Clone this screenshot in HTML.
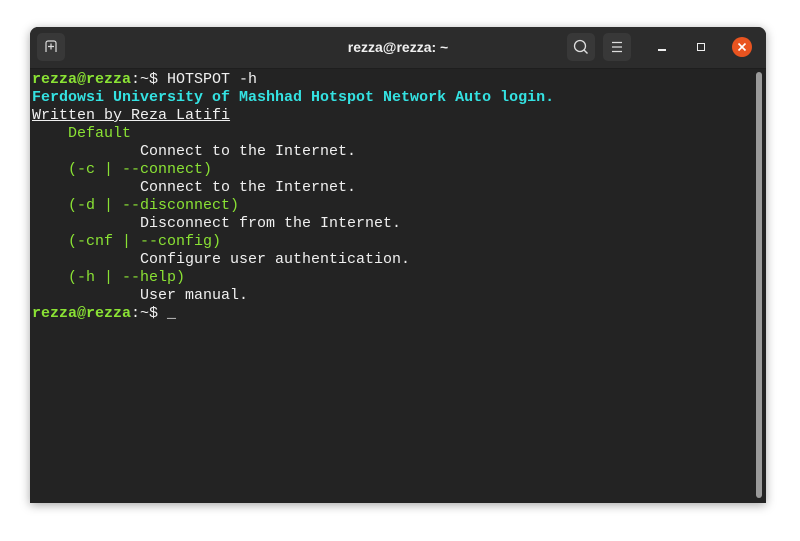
<!DOCTYPE html>
<html><head><style>
html,body{margin:0;padding:0;width:800px;height:541px;background:#fff;overflow:hidden}
.win{position:absolute;left:30px;top:27px;width:736px;height:476px;background:#232323;border-radius:8px 8px 0 0;box-shadow:0 2px 10px rgba(0,0,0,.35);overflow:hidden}
.hb{position:absolute;left:0;top:0;width:736px;height:41px;background:#2c2c2c;border-bottom:1px solid #1e1e1e}
.btn{position:absolute;top:6px;width:28px;height:28px;background:#383838;border-radius:5px}
.title{position:absolute;left:0;width:736px;top:12px;text-align:center;color:#f0f0f0;font:bold 14px "Liberation Sans",sans-serif}
.term{position:absolute;left:2px;top:44px;font:15px/18px "Liberation Mono",monospace;color:#f0f0f0;white-space:pre}
.g{color:#8ae234;font-weight:bold}.gl{color:#8ae234}.c{color:#34e2e2;font-weight:bold}.u{text-decoration:underline}
.sb{position:absolute;left:726px;top:45px;width:6px;height:426px;background:#9a9a9a;border-radius:3px}
</style></head><body>
<div class="win">
<div class="hb">
<div class="btn" style="left:7px"><svg width="28" height="28"><path d="M9 19V10a2 2 0 0 1 2-2h6a2 2 0 0 1 2 2v9M11 13.5h6M14 10.5v6" stroke="#ddd" stroke-width="1.2" fill="none"/></svg></div>
<div class="title">rezza@rezza: ~</div>
<div class="btn" style="left:537px"><svg width="28" height="28"><circle cx="13" cy="13" r="5.5" stroke="#ddd" stroke-width="1.3" fill="none"/><path d="M17 17l3.5 3.5" stroke="#ddd" stroke-width="1.4"/></svg></div>
<div class="btn" style="left:573px"><svg width="28" height="28"><path d="M9 9.5h10M9 14h10M9 18.5h10" stroke="#ddd" stroke-width="1.2"/></svg></div>
<div style="position:absolute;left:628px;top:22px;width:8px;height:1.5px;background:#eee"></div>
<div style="position:absolute;left:667px;top:16px;width:6px;height:6px;border:1.5px solid #eee"></div>
<div style="position:absolute;left:702px;top:10px;width:20px;height:20px;border-radius:50%;background:#e95420"><svg width="20" height="20"><path d="M6.5 6.5l7 7M13.5 6.5l-7 7" stroke="#fff" stroke-width="1.6"/></svg></div>
</div>
<div class="term"><span class="g">rezza@rezza</span>:~$ HOTSPOT -h
<span class="c">Ferdowsi University of Mashhad Hotspot Network Auto login.</span>
<span class="u">Written by Reza Latifi</span>
    <span class="gl">Default</span>
            Connect to the Internet.
    <span class="gl">(-c | --connect)</span>
            Connect to the Internet.
    <span class="gl">(-d | --disconnect)</span>
            Disconnect from the Internet.
    <span class="gl">(-cnf | --config)</span>
            Configure user authentication.
    <span class="gl">(-h | --help)</span>
            User manual.
<span class="g">rezza@rezza</span>:~$ _</div>
<div class="sb"></div>
</div>
</body></html>
